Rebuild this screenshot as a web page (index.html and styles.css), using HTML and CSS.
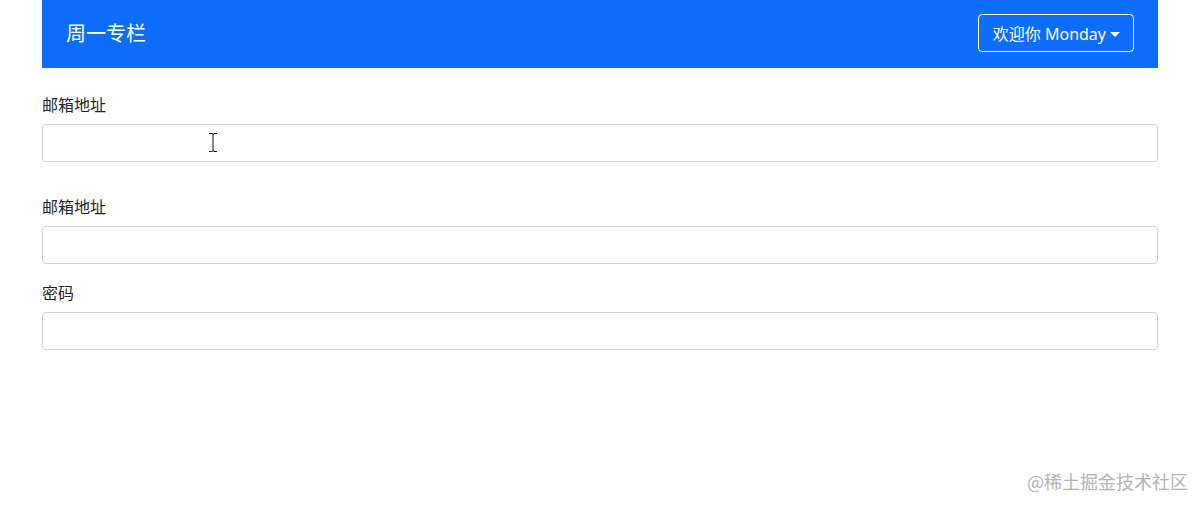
FILE: index.html
```html
<!DOCTYPE html>
<html lang="zh-CN">
<head>
<meta charset="utf-8">
<title>周一专栏</title>
<link rel="stylesheet" href="styles.css">
</head>
<body>
<div class="container">
  <nav class="navbar">
    <a class="brand" href="#">周一专栏</a>
    <button class="dropdown-btn" type="button">欢迎你 Monday<span class="caret"></span></button>
  </nav>
  <form class="form first">
    <div class="group">
      <label class="label">邮箱地址</label>
      <div class="input-wrap">
        <input class="input" type="text">
        <svg class="ibeam" width="10" height="19" viewBox="0 0 10 19"><path d="M1 0.5h3M6 0.5h3M5 1v17M1 18.5h3M6 18.5h3M4 1h2M4 18h2" stroke="#111" stroke-width="1" fill="none"/></svg>
      </div>
    </div>
  </form>
  <form class="form">
    <div class="group">
      <label class="label">邮箱地址</label>
      <input class="input" type="email">
    </div>
    <div class="group">
      <label class="label">密码</label>
      <input class="input" type="password">
    </div>
  </form>
</div>
<div class="watermark">@稀土掘金技术社区</div>
</body>
</html>
```

FILE: styles.css
```css
html, body {
  margin: 0;
  padding: 0;
  background: #fff;
}
body {
  font-family: "Noto Sans", "Noto Sans CJK SC", sans-serif;
  color: #212529;
  font-size: 16px;
  line-height: 24px;
}
.container {
  width: 1116px;
  margin-left: 42px;
}
.navbar {
  height: 68px;
  background: #0d6efd;
  display: flex;
  align-items: center;
  justify-content: space-between;
  padding: 0 24px;
  box-sizing: border-box;
}
.brand {
  color: #fff;
  text-decoration: none;
  font-size: 20px;
  line-height: 30px;
  font-family: "Noto Sans CJK SC", sans-serif;
  margin-top: -2px;
}
.dropdown-btn {
  height: 38px;
  margin-top: -2px;
  padding: 0 13px 0 14px;
  border: 1px solid #f8f9fa;
  border-radius: 4px;
  background: transparent;
  color: #fff;
  font-family: "Noto Sans", "Noto Sans CJK SC", sans-serif;
  font-size: 16px;
  display: flex;
  align-items: center;
}
.caret {
  display: inline-block;
  margin-left: 4px;
  margin-top: 2px;
  width: 0;
  height: 0;
  border-top: 5px solid #fff;
  border-left: 5px solid transparent;
  border-right: 5px solid transparent;
}
.form {
  margin-bottom: 16px;
}
.form.first {
  margin-top: 24px;
  margin-bottom: 32px;
}
.group {
  margin-bottom: 16px;
}
.label {
  display: block;
  margin-bottom: 8px;
  font-family: "Noto Sans CJK SC", sans-serif;
  font-size: 16px;
  line-height: 24px;
}
.input-wrap {
  position: relative;
}
.input {
  display: block;
  width: 100%;
  height: 38px;
  box-sizing: border-box;
  border: 1px solid #ced4da;
  border-radius: 4px;
  background: #fff;
  padding: 6px 12px;
  font-size: 16px;
  margin: 0;
}
.ibeam {
  position: absolute;
  left: 166px;
  top: 9px;
}
.watermark {
  position: absolute;
  left: 1027px;
  top: 468px;
  font-family: "Noto Sans CJK SC", sans-serif;
  font-size: 18px;
  line-height: 26px;
  color: #b4b4b4;
  white-space: nowrap;
}
```
